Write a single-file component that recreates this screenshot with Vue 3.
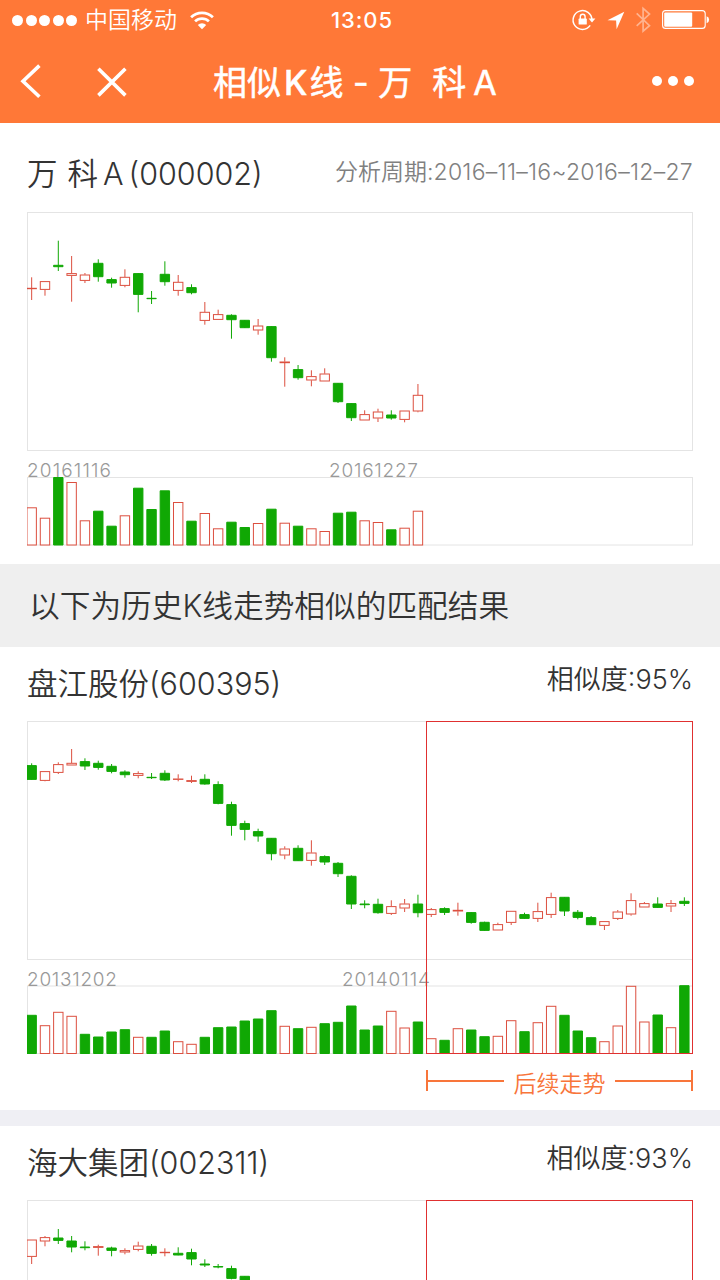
<template>
  <div class="page">
    <header class="header">
      <div class="status-bar">
        <div class="signal"><i v-for="n in 5" :key="n"></i></div>
        <span class="carrier">中国移动</span>
        <svg class="wifi" width="24" height="19" viewBox="0 0 24 19" fill="none" stroke="#fff" stroke-width="2.7">
          <path d="M1.1 6.3a15.4 15.4 0 0 1 21.8 0" />
          <path d="M5.1 10.4a9.8 9.8 0 0 1 13.8 0" />
          <path d="M12 18.3l-4.2-4.3a6 6 0 0 1 8.4 0z" fill="#fff" stroke="none" />
        </svg>
        <span class="time">13:05</span>
        <svg class="status-icons" width="140" height="28" viewBox="570 6 140 28">
          <path d="M590.2 25.4a9.4 9.4 0 1 1 1.7-5.4" fill="none" stroke="#fff" stroke-width="1.5" />
          <path d="M588.6 18.4h6.8l-3.4 4.2z" fill="#fff" />
          <rect x="578.6" y="18.6" width="8.2" height="6" rx=".6" fill="#fff" />
          <path d="M580.3 19v-2.3a2.4 2.4 0 0 1 4.8 0v2.3" fill="none" stroke="#fff" stroke-width="1.4" />
          <path d="M624.3 11.7l-16.8 8.6 8.6.3.5 8.6z" fill="#fff" />
          <path
            d="M636.7 13.4l12.8 12.2-6.4 5.6V8.4l6.4 5.6-12.8 11.8"
            fill="none" stroke="#ffb38f" stroke-width="1.7"
          />
          <rect x="662.6" y="10.6" width="42.6" height="17.8" rx="3" fill="none" stroke="#fff" stroke-width="1.1" />
          <rect x="664.2" y="12.4" width="28" height="14.4" rx="1" fill="#fff" />
          <path d="M706.6 16.2a3.7 3.7 0 0 1 0 7z" fill="#fff" />
        </svg>
      </div>
      <div class="nav-bar">
        <svg class="nav-left" width="140" height="40" viewBox="0 60 140 40" fill="none" stroke="#fff" stroke-width="3.6">
          <path d="M39.4 64.6L23 80.2l16.4 15.6" />
          <path d="M98.4 67.8l27 26.6M125.4 67.8l-27 26.6" />
        </svg>
        <h1 class="nav-title">相似<span class="nav-k">K</span>线 - <span class="nav-wan">万</span><span class="nav-ke">科</span>A</h1>
        <div class="more"><i v-for="n in 3" :key="n"></i></div>
      </div>
    </header>

    <template v-for="(stock, index) in stocks" :key="stock.code">
      <section class="card" :class="{ source: index === 0 }">
        <div class="card-head">
          <h2 class="stock-name">
            <template v-if="index === 0"><span class="wan">万</span><span class="ke">科</span><span class="letter">A</span></template>
            <template v-else>{{ stock.name }}</template><span class="latin">({{ stock.code }})</span>
          </h2>
          <span v-if="stock.period" class="period">分析周期:<span class="period-range">{{ stock.period }}</span></span>
          <span v-else class="similarity">相似度<span class="latin">:{{ stock.similarity }}%</span></span>
        </div>

        <svg class="chart" width="667" height="334" viewBox="0 0 667 334">
          <g fill="none" stroke="#e4e4e4">
            <rect x=".5" y=".5" width="665" height="238" />
            <rect x=".5" :y="stock.base - 67.5" width="665" height="67.5" />
          </g>
          <text class="date" x="0" y="264.5" :textLength="stock.startWidth">{{ stock.start }}</text>
          <text class="date" :x="stock.endX" y="264.5" :textLength="stock.endWidth">{{ stock.end }}</text>
          <g v-for="(bar, i) in stock.bars" :key="i" :class="bar[0] === 'r' ? 'up' : 'down'">
            <line :x1="center(i)" :x2="center(i)" :y1="bar[1]" :y2="bar[0] === 'r' ? bar[2] : bar[4]" />
            <line v-if="bar[0] === 'r'" :x1="center(i)" :x2="center(i)" :y1="bar[3]" :y2="bar[4]" />
            <rect :x="center(i) - 4.7" :y="bar[2] + 0.3" width="9.4" :height="Math.max(bar[3] - bar[2] - 0.6, 0.4)" />
            <rect
              v-if="bar[5]"
              :x="center(i) - 4.7" :y="stock.base - bar[5] + 0.5"
              width="9.4" :height="bar[5] - 0.5"
            />
          </g>
          <rect v-if="index > 0" class="follow-box" x="399.5" y=".5" width="266" height="332" />
        </svg>

        <div v-if="index === 1" class="follow">
          <span class="line left"></span>
          <span class="follow-text">后续走势</span>
          <span class="line right"></span>
        </div>
      </section>
      <div v-if="index === 0" class="tip">以下为历史K线走势相似的匹配结果</div>
      <div v-if="index === 1" class="divider"></div>
    </template>
  </div>
</template>

<script setup>
// 第 i 根 K 线的中心
const center = (i) => 4.67 + i * 13.32

// 每根: [涨跌, 最高, 实体上, 实体下, 最低, 成交量]
const vanke = [
  ['r', 65.3, 76, 77, 88, 37.7], ['r', 69.3, 69.3, 77.7, 83.7, 27.3], ['g', 28.7, 53, 55, 59, 68],
  ['r', 44, 61.3, 63.7, 89.7, 63], ['r', 61, 62.7, 68.7, 71, 24.7], ['g', 47.3, 51, 65, 69.7, 34.3],
  ['g', 65.7, 67.3, 71.3, 75.7, 19.3], ['r', 57.3, 65, 73.7, 75.3, 29.7], ['g', 61.3, 61.3, 82.7, 100.3, 57.3],
  ['g', 79, 86, 87, 92, 36], ['g', 49.3, 62, 70, 73.7, 54.7], ['r', 63, 70, 78.7, 83.7, 43],
  ['g', 72.3, 75.3, 81, 82.3, 24.3], ['r', 90, 100, 108.7, 112.7, 32], ['r', 97.7, 102.3, 107.7, 107.7, 16.7],
  ['g', 102.3, 103, 108, 126.7, 23.3], ['g', 108, 108, 116, 116, 18], ['r', 107, 113.7, 118.3, 122.7, 22],
  ['g', 114.3, 114.3, 146, 149.7, 36.3], ['r', 145.3, 149.7, 151, 174.7, 22.3], ['g', 153, 157.3, 166, 167.7, 19.3],
  ['r', 158.3, 164.3, 168.3, 174.3, 16.7], ['r', 156.3, 161.7, 169.3, 169.3, 14], ['g', 171, 171, 190, 191, 32.3],
  ['g', 191.3, 191.3, 206, 209, 33.3], ['r', 198.3, 202.3, 208.3, 208.3, 24.7], ['r', 196.7, 199.7, 206.3, 210, 23],
  ['g', 198.3, 202.7, 206.3, 207.7, 15.7], ['r', 198.7, 198.7, 207.7, 210.3, 17.3], ['r', 172, 183, 199.3, 200.3, 34.3]
]

const panjiang = [
  ['g', 42.3, 44.3, 58.7, 58.7, 38.7], ['r', 50.3, 50.3, 59.7, 60.3, 28.3], ['r', 41.3, 43.3, 51.7, 53, 41.7],
  ['r', 28, 42, 44.3, 44.3, 37.7], ['g', 37.3, 40.3, 45.3, 49, 19.7], ['g', 39.7, 42, 46.7, 48.7, 17],
  ['g', 43, 45, 50.7, 52.3, 22], ['g', 49.3, 50.7, 54, 56.7, 24.3], ['r', 50.3, 52.3, 54.7, 57.3, 16.7],
  ['g', 52, 56, 57, 58, 16.7], ['g', 49.3, 52, 59.3, 60, 23], ['r', 53.3, 57.7, 58.7, 60.3, 12.3],
  ['r', 54.7, 59.3, 60.7, 62, 9.7], ['g', 53.3, 58, 63.3, 63.7, 16.7], ['g', 60.3, 63.3, 82.7, 83.3, 26.3],
  ['g', 80.7, 83.3, 104.7, 114.7, 27], ['g', 99.7, 102.3, 108.7, 119.3, 33], ['g', 107.7, 110.3, 115.3, 120.7, 35],
  ['g', 117, 117, 133, 139.3, 43.3], ['r', 125.3, 127.7, 134.3, 138.3, 27.7], ['g', 124.3, 127, 140, 140, 25.3],
  ['r', 119.3, 131.7, 139.7, 144.7, 26.7], ['g', 134.3, 135.3, 141.3, 144, 30.3], ['g', 141, 142, 153, 156, 31.7],
  ['g', 154.3, 155, 183.3, 188, 48], ['g', 179.3, 182.7, 184, 187.3, 24], ['g', 177.7, 183, 192, 192.7, 28],
  ['r', 179.3, 185.3, 192.7, 194, 42.7], ['r', 178, 182.7, 187.3, 191, 26], ['g', 173.7, 182.7, 192, 196.3, 32],
  ['r', 187, 188.3, 193.7, 196, 15.3], ['g', 186.3, 187.3, 191.7, 194, 13.7], ['r', 181.7, 189, 190.3, 194.7, 25.3],
  ['g', 191, 191.3, 201.7, 202.7, 24], ['g', 200.7, 201, 209.7, 209.7, 17.3], ['r', 201.7, 203.3, 209.3, 209.3, 17.7],
  ['r', 190, 190, 201.7, 204, 33.3], ['g', 191.7, 193.3, 197.7, 197.7, 22.3], ['r', 181.7, 190.3, 197.7, 201, 31.3],
  ['r', 171.7, 176.3, 193.7, 197, 47.7], ['g', 176, 176, 190.3, 195, 38.7], ['g', 189, 191, 196.7, 198.3, 23],
  ['g', 195, 196.3, 204, 204, 16.3], ['r', 200.3, 200.3, 204.7, 209, 12.3], ['r', 189, 190.7, 197.7, 199, 28],
  ['r', 172.3, 179.3, 193.3, 194.7, 67.7], ['r', 181, 182.3, 186.3, 186.3, 32], ['g', 176.3, 182.7, 186.7, 186.7, 39],
  ['r', 179, 182.3, 185.3, 191, 26.3], ['g', 176.3, 180, 182.7, 185, 68.3]
]

const haida = [
  ['r', 39.7, 39.7, 56.7, 64], ['r', 36, 37.3, 41.3, 46.3], ['g', 29, 37.7, 40.7, 44],
  ['g', 36, 40.7, 47.3, 52.3], ['g', 41.3, 46.7, 48, 50.3], ['r', 44.7, 46.3, 47.7, 55.7],
  ['g', 46.7, 47.7, 50.7, 56.3], ['r', 48.3, 50.3, 52.3, 54.3], ['r', 41.7, 45.7, 49.7, 51.3],
  ['g', 44, 46, 53.7, 55.7], ['r', 48.3, 52, 53, 56.3], ['g', 47.3, 53, 55.3, 55.3],
  ['g', 48.7, 52.3, 59.3, 65.3], ['g', 59.3, 63.7, 65.3, 67], ['g', 64, 66.3, 67.3, 68.3],
  ['g', 65.7, 68.3, 78.7, 79.3], ['g', 76, 76, 90, 92]
]

// base 为成交量底线位置
const stocks = [
  {
    code: '000002', period: '2016–11–16~2016–12–27', bars: vanke, base: 333,
    start: '20161116', startWidth: 84, end: '20161227', endX: 302, endWidth: 89
  },
  {
    name: '盘江股份', code: '600395', similarity: 95, bars: panjiang, base: 332.5,
    start: '20131202', startWidth: 90, end: '20140114', endX: 315, endWidth: 88
  },
  { name: '海大集团', code: '002311', similarity: 93, bars: haida, base: 332.5 }
]
</script>

<style>
body {
  overflow: hidden;
}
</style>

<style scoped>
.page {
  width: 720px;
  height: 1280px;
  overflow: hidden;
  background: #fff;
  color: #333;
  font-family: Inter, "Noto Sans CJK SC", sans-serif;
  font-weight: 350;
}

h1,
h2 {
  margin: 0;
  font-weight: inherit;
}

svg {
  display: block;
  flex: none;
}

.header {
  height: 123px;
  background: #ff7837;
  color: #fff;
}

.status-bar {
  display: flex;
  align-items: center;
  height: 40px;
  padding: 0 10px 0 12px;
}

.signal {
  display: flex;
  gap: 2.5px;
  width: 73px;
}

.signal i {
  width: 11px;
  height: 11px;
  border-radius: 50%;
  background: #fff;
}

.carrier {
  width: 105px;
  font-size: 23px;
  line-height: 40px;
}

.time {
  width: 239px;
  margin-left: 117px;
  font-size: 22px;
  font-weight: 500;
  letter-spacing: 0.9px;
}

.nav-bar {
  display: flex;
  align-items: center;
  height: 81px;
}

.nav-title {
  width: 511px;
  padding-left: 73px;
  font-size: 34px;
  font-weight: 400;
  white-space: pre;
  -webkit-text-stroke: 0.5px #fff;
}

.nav-k {
  margin: 0 2px 0 3px;
  font-weight: 500;
}

.nav-wan {
  margin-right: 20px;
}

.nav-ke {
  margin-right: 7px;
}

.more {
  display: flex;
  gap: 6px;
  margin-left: -72px;
}

.more i {
  width: 10px;
  height: 10px;
  border-radius: 50%;
  background: #fff;
}

.card {
  padding: 0 27px;
}

.card.source {
  height: 441px;
}

.card-head {
  display: flex;
  justify-content: space-between;
  height: 74px;
}

.source .card-head {
  height: 89px;
}

.stock-name {
  padding-top: 15px;
  font-size: 30.5px;
  line-height: 44px;
  white-space: nowrap;
}

.source .stock-name {
  padding-top: 29px;
}

.latin {
  font-weight: 300;
}

.wan {
  margin-right: 10px;
}

.letter {
  margin: 0 5px;
  font-weight: 300;
}

.period {
  padding-top: 33px;
  font-size: 23px;
  line-height: 32px;
  color: #808080;
}

.period-range {
  font-weight: 300;
  letter-spacing: 0.27px;
}

.similarity {
  padding-top: 15px;
  font-size: 27px;
  line-height: 36px;
}

.date {
  fill: #999;
  font-size: 19px;
  font-weight: 300;
}

.up {
  fill: #fff;
  stroke: #dc4f3f;
}

.down {
  fill: #10a804;
  stroke: #10a804;
  stroke-linejoin: round;
}

.follow-box {
  fill: none;
  stroke: #e03030;
}

.tip {
  height: 83px;
  padding-left: 29px;
  background: #efefef;
  font-size: 30.7px;
  line-height: 84px;
}

.follow {
  display: flex;
  align-items: center;
  justify-content: space-between;
  width: 267px;
  height: 51px;
  margin: 0 0 4px 399px;
  color: #f8753a;
}

.follow-text {
  padding-top: 3px;
  font-size: 23px;
}

.line {
  width: 76px;
  height: 21px;
  background: linear-gradient(#f8753a, #f8753a) center / 100% 2px no-repeat;
}

.left {
  border-left: 2px solid #f8753a;
}

.right {
  border-right: 2px solid #f8753a;
}

.divider {
  height: 16px;
  background: #efeff4;
}
</style>
